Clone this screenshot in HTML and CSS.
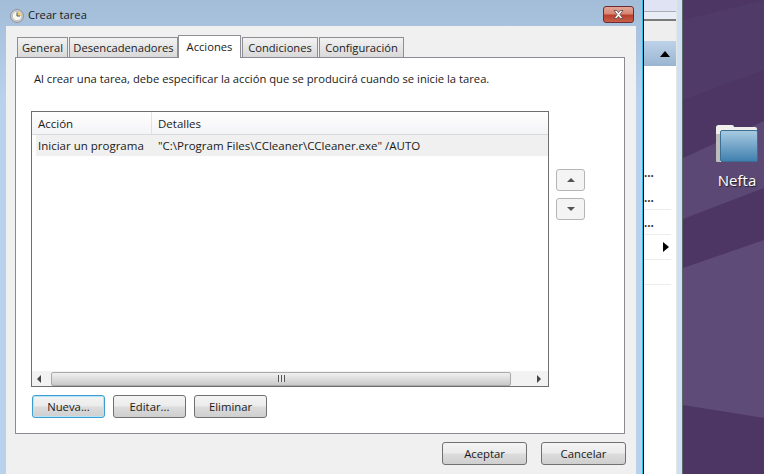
FILE: index.html
```html
<!DOCTYPE html>
<html lang="es">
<head>
    <meta charset="UTF-8">
    <meta name="viewport" content="width=device-width, initial-scale=1.0">
    <link rel="stylesheet" href="styles.css">
    <title>Crear tarea</title>
</head>
<body>
    <!-- Ventana de dialogo -->
    <section class="dialog">
        <header class="titlebar">
            <svg class="clock" width="14" height="14" viewBox="0 0 14 14">
                <circle cx="7" cy="7" r="6.4" fill="#d8d8d8" stroke="#8a8a8a"/>
                <circle cx="7" cy="7" r="4.6" fill="#f6f6f2" stroke="#a8a8a8" stroke-width="0.6"/>
                <path d="M7 7V2.8A4.2 4.2 0 0 1 11.2 7Z" fill="#f0cf7a"/>
                <path d="M7 3.5V7H10" fill="none" stroke="#555" stroke-width="1"/>
            </svg>
            <span class="title">Crear tarea</span>
            <button class="close" type="button" aria-label="Cerrar">
                <svg width="15" height="11" viewBox="0 0 15 11">
                    <path d="M3 1.5H5.8L7.5 3.6L9.2 1.5H12L9 5.5L12 9.5H9.2L7.5 7.4L5.8 9.5H3L6 5.5Z" fill="#f4f4f4" stroke="#5a4a4a" stroke-width="0.8"/>
                </svg>
            </button>
        </header>

        <div class="content">
            <!-- Pestanas -->
            <nav class="tabs">
                <a class="tab tab-general">General</a>
                <a class="tab tab-triggers">Desencadenadores</a>
                <a class="tab tab-active">Acciones</a>
                <a class="tab tab-conditions">Condiciones</a>
                <a class="tab tab-config">Configuración</a>
            </nav>

            <div class="pane">
                <p class="intro">Al crear una tarea, debe especificar la acción que se producirá cuando se inicie la tarea.</p>

                <div class="list-area">
                    <div class="list">
                        <div class="list-head">
                            <span class="col-action">Acción</span>
                            <span class="col-details">Detalles</span>
                        </div>
                        <div class="list-row">
                            <span class="col-action">Iniciar un programa</span>
                            <span class="col-details">"C:\Program Files\CCleaner\CCleaner.exe" /AUTO</span>
                        </div>
                        <div class="list-body"></div>
                        <div class="hscroll">
                            <span class="arrow arrow-left"></span>
                            <div class="thumb"><span class="grip"></span></div>
                            <span class="arrow arrow-right"></span>
                        </div>
                    </div>
                    <div class="order">
                        <button class="order-btn" type="button" aria-label="Subir"><span class="tri-up"></span></button>
                        <button class="order-btn" type="button" aria-label="Bajar"><span class="tri-down"></span></button>
                    </div>
                </div>

                <div class="actions">
                    <button class="btn btn-focus" type="button">Nueva...</button>
                    <button class="btn" type="button">Editar...</button>
                    <button class="btn" type="button">Eliminar</button>
                </div>
            </div>

            <footer class="footer">
                <button class="btn btn-wide" type="button">Aceptar</button>
                <button class="btn btn-wide" type="button">Cancelar</button>
            </footer>
        </div>
    </section>

    <!-- Ventana que queda detras -->
    <aside class="behind">
        <div class="behind-inner">
            <div class="b-glass"></div>
            <div class="b-toolbar"></div>
            <div class="b-head"><span class="b-up"></span></div>
            <div class="b-gap"></div>
            <div class="b-row b-plain">...</div>
            <div class="b-row">...</div>
            <div class="b-row">...</div>
            <div class="b-row"><span class="b-next"></span></div>
            <div class="b-row"></div>
        </div>
    </aside>

    <!-- Escritorio -->
    <div class="desktop">
        <svg class="wallpaper" width="81" height="474" viewBox="0 0 81 474">
            <polygon points="0,158 81,121 81,188 0,219" fill="#5c4874"/>
            <polygon points="0,268 81,240 81,418 0,405" fill="#5f4b77"/>
            <polygon points="0,20 81,0 81,70 0,100" fill="#503a68"/>
        </svg>
        <div class="folder">
            <svg width="44" height="40" viewBox="0 0 44 40">
                <defs>
                    <linearGradient id="folderFront" x1="0" y1="0" x2="0" y2="1">
                        <stop offset="0" stop-color="#a9cbe2"/>
                        <stop offset="1" stop-color="#3f7fae"/>
                    </linearGradient>
                </defs>
                <path d="M1 3.5Q1 1 3.5 1H17Q19 1 19 3H40Q42 3 42 5V37Q42 38 41 38H3Q1 38 1 36Z" fill="#f0efec"/>
                <path d="M1 10H5V38H3Q1 38 1 36Z" fill="#bdbdbb"/>
                <rect x="5.5" y="6.5" width="37" height="31" rx="1.5" fill="url(#folderFront)" stroke="#3c6f94"/>
            </svg>
            <span class="folder-name">Nefta</span>
        </div>
    </div>
</body>
</html>
```

FILE: styles.css
```css
/* =======================
   General
======================= */
body {
    margin: 0;
    width: 764px;
    height: 474px;
    overflow: hidden;
    display: flex;
    font-family: "Open Sans", sans-serif;
    font-size: 11.5px;
    color: #1a1a1a;
    background-color: #4d3663;
}

/* =======================
   Dialogo
======================= */
.dialog {
    width: 644px;
    height: 474px;
    flex: none;
    box-sizing: border-box;
    padding: 0 7px 0 6px;
    display: flex;
    flex-direction: column;
    border-right: 1px solid #000;
    background: linear-gradient(#a3bcd8 0, #b8d1ec 100px, #b9d2ec 100%);
    box-shadow: inset -1px 0 0 #2fc1ea;
}

.titlebar {
    height: 26px;
    flex: none;
    display: flex;
    align-items: flex-start;
}

.clock {
    margin: 9px 0 0 4px;
}

.title {
    margin: 7px 0 0 4px;
    font-size: 11.2px;
}

.close {
    width: 31px;
    height: 17px;
    margin: 6px 2px 0 auto;
    padding: 0;
    display: flex;
    align-items: center;
    justify-content: center;
    border: 1px solid #6b2d33;
    border-radius: 3px;
    background: linear-gradient(#e2a596 0, #d98674 45%, #b8402c 55%, #c9604a 100%);
}

.content {
    flex: 1;
    display: flex;
    flex-direction: column;
    padding: 0 11px 0 9px;
    background-color: #f0f0f0;
}

/* =======================
   Pestanas
======================= */
.tabs {
    display: flex;
    align-items: flex-end;
    height: 31px;
    padding-left: 2px;
    font-size: 11.2px;
}

.tab {
    height: 20px;
    margin-right: 1px;
    box-sizing: border-box;
    border: 1px solid #8e8f94;
    border-bottom: none;
    text-align: center;
    line-height: 19px;
    color: #222;
    background: linear-gradient(#f2f2f2, #d9d9d9);
}

.tab-general { width: 51px; }
.tab-triggers { width: 109px; }
.tab-conditions { width: 76px; }
.tab-config { width: 85px; }

.tab-active {
    width: 63px;
    height: 23px;
    margin: 0 1px -1px -1px;
    line-height: 21px;
    position: relative;
    background: #fff;
}

.pane {
    height: 377px;
    box-sizing: border-box;
    border: 1px solid #898c90;
    background-color: #fff;
    padding: 13px 0 0 15px;
}

.intro {
    margin: 0 0 0 3px;
    height: 40px;
    line-height: 16px;
    font-size: 11.23px;
}

/* =======================
   Lista de acciones
======================= */
.list-area {
    display: flex;
}

.list {
    width: 518px;
    height: 276px;
    box-sizing: border-box;
    border: 1px solid #6e6e6e;
    display: flex;
    flex-direction: column;
}

.list-head {
    height: 23px;
    flex: none;
    box-sizing: border-box;
    display: flex;
    align-items: center;
    border-bottom: 1px solid #d8dadd;
    background: linear-gradient(#fff, #f3f4f6);
}

.list-row {
    height: 21px;
    flex: none;
    margin-left: 4px;
    display: flex;
    align-items: center;
    background-color: #f0f0f0;
}

.col-action {
    width: 120px;
    flex: none;
    box-sizing: border-box;
    padding-left: 2px;
}

.list-head .col-action {
    width: 120px;
    padding-left: 6px;
    height: 100%;
    line-height: 23px;
    border-right: 1px solid #e0e2e5;
}

.list-head .col-details {
    padding-left: 6px;
}

.list-row .col-details {
    padding-left: 2px;
}

.list-body {
    flex: 1;
}

.hscroll {
    height: 15px;
    flex: none;
    display: flex;
    align-items: center;
    background-color: #f2f2f2;
}

.thumb {
    width: 460px;
    height: 14px;
    box-sizing: border-box;
    border: 1px solid #a9a9a9;
    border-radius: 2px;
    display: flex;
    align-items: center;
    justify-content: center;
    background: linear-gradient(#f0f0f0, #c9c9c9);
}

.grip {
    width: 7px;
    height: 7px;
    background: repeating-linear-gradient(90deg, #555 0 1px, #e8e8e8 1px 3px);
}

.arrow {
    width: 0;
    height: 0;
    border-top: 4px solid transparent;
    border-bottom: 4px solid transparent;
}

.arrow-left {
    margin: 0 10px 0 5px;
    border-right: 4px solid #444;
}

.arrow-right {
    margin-left: 26px;
    border-left: 4px solid #444;
}

.order {
    display: flex;
    flex-direction: column;
    gap: 7px;
    margin: 58px 0 0 7px;
}

.order-btn {
    width: 29px;
    height: 22px;
    padding: 0;
    display: flex;
    align-items: center;
    justify-content: center;
    border: 1px solid #b5b5b5;
    border-radius: 3px;
    background-color: #f4f4f4;
}

.tri-up, .tri-down {
    width: 0;
    height: 0;
    border-left: 4px solid transparent;
    border-right: 4px solid transparent;
}

.tri-up { border-bottom: 4px solid #555; }
.tri-down { border-top: 4px solid #555; }

/* =======================
   Botones
======================= */
.actions {
    display: flex;
    gap: 8px;
    margin: 8px 0 0 1px;
}

.btn {
    width: 73px;
    height: 23px;
    padding: 0;
    box-sizing: border-box;
    font-family: inherit;
    font-size: 11.3px;
    color: #1a1a1a;
    border: 1px solid #707070;
    border-radius: 3px;
    background: linear-gradient(#f4f4f4 0, #ebebeb 48%, #dcdcdc 52%, #cfcfcf 100%);
}

.btn-focus {
    border-color: #3c9fd0;
    box-shadow: inset 0 0 0 1px #b4e4f7;
}

.btn-wide {
    width: 85px;
}

.footer {
    display: flex;
    justify-content: flex-end;
    gap: 14px;
    margin: 8px -1px 0 0;
}

/* =======================
   Ventana de atras
======================= */
.behind {
    width: 39px;
    flex: none;
    box-sizing: border-box;
    padding-right: 5px;
    border-right: 1px solid #5c6a68;
    background-color: #cfe0f2;
}

.behind-inner {
    height: 474px;
    width: 33px;
    box-sizing: border-box;
    border-right: 1px solid #e6e6e6;
    background-color: #fff;
    font-weight: 700;
    color: #333;
}

.b-glass {
    height: 19px;
    box-sizing: border-box;
    border-bottom: 1px solid #e8edf6;
    background: linear-gradient(#dfe3f3 0, #dfe3f3 11px, #a9adb5 11px, #a9adb5 12px, #e8edf6 12px);
}

.b-toolbar {
    height: 22px;
    box-sizing: border-box;
    border-top: 2px solid #7a7a7a;
    background-color: #eee;
}

.b-head {
    height: 25px;
    position: relative;
    background: linear-gradient(#bdd2e8, #9ab5d1);
}

.b-up {
    position: absolute;
    left: 16px;
    top: 10px;
    width: 0;
    height: 0;
    border-left: 5px solid transparent;
    border-right: 5px solid transparent;
    border-bottom: 6px solid #000;
}

.b-gap {
    height: 94px;
}

.b-row {
    height: 25px;
    box-sizing: border-box;
    margin-right: 5px;
    border-bottom: 1px solid #ececec;
    line-height: 26px;
    position: relative;
    overflow: hidden;
}

.b-plain {
    border-bottom-color: transparent;
}

.b-next {
    position: absolute;
    left: 19px;
    top: 7px;
    width: 0;
    height: 0;
    border-top: 5px solid transparent;
    border-bottom: 5px solid transparent;
    border-left: 6px solid #000;
}

/* =======================
   Escritorio
======================= */
.desktop {
    flex: 1;
    position: relative;
    overflow: hidden;
}

.wallpaper {
    position: absolute;
    left: 0;
    top: 0;
}

.folder {
    position: relative;
    display: flex;
    flex-direction: column;
    align-items: center;
    padding-top: 124px;
    margin-left: 21px;
    width: 66px;
    flex: none;
}

.folder-name {
    margin-top: 6px;
    font-size: 15px;
    color: #fff;
    text-shadow: 1px 1px 1px #222;
}
```
